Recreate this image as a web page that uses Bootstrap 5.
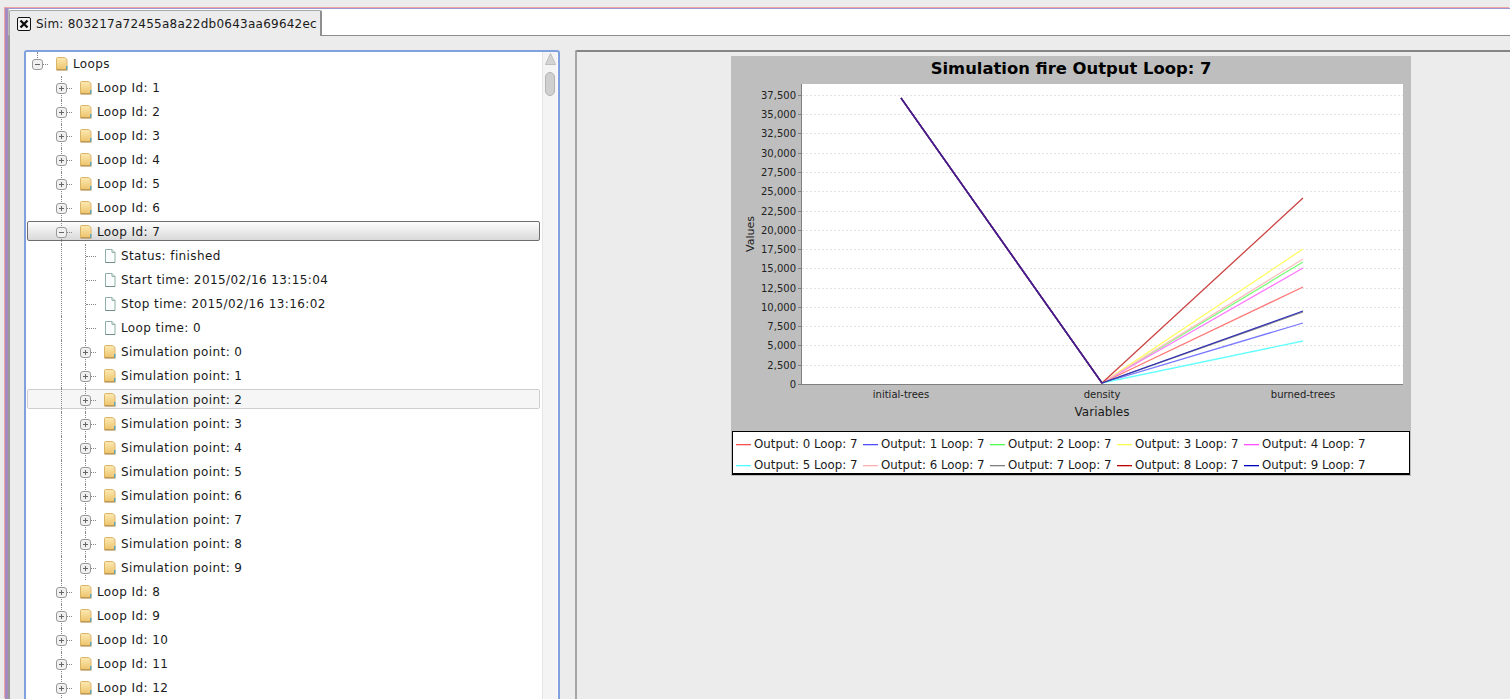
<!DOCTYPE html>
<html lang="en">
  <head>
    <meta charset="UTF-8" />
    <meta name="viewport" content="width=device-width, initial-scale=1.0" />
    <title>Sim output</title>
    <link
      href="https://cdn.jsdelivr.net/npm/bootstrap@5.3.5/dist/css/bootstrap.min.css"
      rel="stylesheet"
    />
    <style>
      html, body { height: 699px; overflow: hidden; background: #ececec; }
      body { font-family: "DejaVu Sans", sans-serif; font-size: 12px; color: #1a1a1a; }
      .app-frame { height: 699px; padding: 8px 0 0 5px; }
      .app-inner { height: 691px; border-left: 3px solid #a58bc0; border-top: 1px solid #9c98d2; box-shadow: -1px -1px 0 #eea3a6; background: #ececec; }
      .tab-strip { height: 27px; padding-top: 1px; background: #fff; border-bottom: 1px solid #8c8c8c; border-left: 1px solid #bdbdbd; }
      .tab-strip .nav-link { height: 26px; width: 313px; padding: 0 0 0 7px; margin: 0; border: 1px solid #a8a8a8; border-right: 2px solid #8f8f8f; border-bottom: 0; border-radius: 2px 2px 0 0; background: #ececec; color: #1a1a1a; font-size: 12px; gap: 5px; letter-spacing: .02em; }
      .tab-body { height: 663px; border-left: 2px solid #9a9a9a; padding: 14px 0 0 14px; gap: 15px; }
      .tree-pane { width: 536px; flex: none; background: #fff; border: 2px solid #7fa2de; border-bottom: 0; border-radius: 3px 3px 0 0; overflow: hidden; }
      .tree-list { width: 517px; flex: none; padding: 0; margin: 0 0 0 -1px; list-style: none; }
      .tree-row { position: relative; height: 24px; display: flex; align-items: center; }
      .tree-row.is-selected::before, .tree-row.is-hover::before { content: ""; position: absolute; left: 2px; right: 2px; top: 1px; bottom: 3px; border-radius: 2px; }
      .tree-row.is-selected::before { border: 1px solid #6e6e6e; background: linear-gradient(#fdfdfd, #d9d9d9); }
      .tree-row.is-hover::before { border: 1px solid #cfcfcf; background: #f6f6f6; }
      .tree-cell { position: relative; width: 24px; height: 24px; flex: none; }
      .tree-guide::before { content: ""; position: absolute; left: 12px; top: 0; bottom: 0; border-left: 1px dotted #888; }
      .tree-up::before { content: ""; position: absolute; left: 12px; top: 0; height: 8px; border-left: 1px dotted #888; }
      .tree-elbow::after { content: ""; position: absolute; left: 13px; right: 1px; top: 12px; border-top: 1px dotted #888; }
      .tree-cell svg { position: absolute; z-index: 1; }
      .tree-expand { left: 7px; top: 7px; }
      .tree-icon { left: 7px; top: 5px; }
      .tree-label { position: relative; white-space: nowrap; letter-spacing: .033em; }
      .tree-scroll { width: 15px; flex: none; background: #f4f4f4; border-left: 1px solid #e6e6e6; padding: 1px 0 0 2px; }
      .scroll-thumb { width: 10px; height: 24px; margin: 7px 0 0 0; background: #cfcfcf; border: 1px solid #b5b5b5; border-radius: 5px; }
      .chart-pane { flex: 1 1 auto; background: #ececec; border-top: 2px solid #858585; border-left: 2px solid #a6a6a6; border-radius: 2px 0 0 0; padding: 4px 0 0 154px; }
      .chart-card { width: 680px; background: #bebebe; padding: 0 1px 1px 1px; }
      .chart-card svg { display: block; margin-left: -1px; }
      .legend-box { height: 44px; background: #fff; border: 1px solid #000; border-bottom-width: 2px; padding: 2px 0 0 3px; }
      .legend-item { width: 127px; height: 21px; flex: none; align-items: center; gap: 3px; white-space: nowrap; font-size: 11.8px; }
      .legend-line { position: relative; width: 15px; height: 1px; flex: none; background: currentColor; }
      .legend-line::after { content: ""; position: absolute; left: 0; right: 0; top: 1px; height: 1px; background: currentColor; opacity: .3; }
      .chart-title { font-size: 16.4px; font-weight: 700; fill: #000; }
      .chart-tick { font-size: 10px; fill: #222; }
      .chart-axis { font-size: 12px; fill: #1a1a1a; }
    </style>
  </head>
  <body>
    <div class="app-frame">
      <div class="app-inner d-flex flex-column">
        <ul class="nav tab-strip">
          <li class="nav-item">
            <a href="#" class="nav-link d-flex align-items-center">
              <svg width="14" height="14" viewBox="0 0 14 14">
                <rect x=".5" y=".5" width="13" height="13" rx="1.5" fill="#f4f4f4" stroke="#111" />
                <path d="M3.5 3.5l7 7M10.5 3.5l-7 7" stroke="#111" stroke-width="2.4" />
              </svg>
              <span>Sim: 803217a72455a8a22db0643aa69642ec</span>
            </a>
          </li>
        </ul>
        <div class="tab-body d-flex">
          <div class="tree-pane d-flex">
            <ul class="tree-list" id="treeList"></ul>
            <div class="tree-scroll">
              <svg class="d-block" width="11" height="12" viewBox="0 0 11 12">
                <path d="M5.5 .5L10.5 11.5H.5z" fill="#d4d4d4" stroke="#bdbdbd" />
              </svg>
              <div class="scroll-thumb"></div>
            </div>
          </div>
          <div class="chart-pane">
            <div class="chart-card">
              <svg width="680" height="375" viewBox="731 56 680 375" id="chartSvg"></svg>
              <div class="legend-box" id="legendBox"></div>
            </div>
          </div>
        </div>
      </div>
    </div>

    <script src="https://cdn.jsdelivr.net/npm/bootstrap@5.3.5/dist/js/bootstrap.bundle.min.js"></script>
    <script>
      const treeList = document.querySelector("#treeList");
      const chartSvg = document.querySelector("#chartSvg");
      const legendBox = document.querySelector("#legendBox");

      const plusIcon = `<svg class="tree-expand" width="11" height="11" viewBox="0 0 11 11"><rect x=".5" y=".5" width="10" height="10" rx="2.5" fill="#f0f0f0" stroke="#9a9a9a"/><path d="M3 5.5h5M5.5 3v5" stroke="#666"/></svg>`;
      const minusIcon = `<svg class="tree-expand" width="11" height="11" viewBox="0 0 11 11"><rect x=".5" y=".5" width="10" height="10" rx="2.5" fill="#f0f0f0" stroke="#9a9a9a"/><path d="M3 5.5h5" stroke="#666"/></svg>`;
      const folderIcon = `<svg class="tree-icon" width="12" height="14" viewBox="0 0 12 14"><defs><linearGradient id="fg" x1="0" y1="0" x2="0" y2="1"><stop offset="0" stop-color="#fbe9b4"/><stop offset="1" stop-color="#efc46c"/></linearGradient></defs><path d="M.5 1.5a1 1 0 0 1 1-1h7l2.500 2v10h-10.500z" fill="url(#fg)" stroke="#d9b566"/><path d="M.5 13h11" stroke="#a87f3a"/><path d="M10 9h1.500v3.500H10z" fill="#57a8c9"/></svg>`;
      const leafIcon = `<svg class="tree-icon" width="12" height="14" viewBox="0 0 12 14"><path d="M1.500 .5h6.500l3 3v10h-9.500z" fill="#fbfdfd" stroke="#8fb0a8"/><path d="M8 .5v3h3" fill="#e3eeeb" stroke="#8fb0a8"/><path d="M1.500 13.500h9.500" stroke="#6f8f88"/></svg>`;

      function addRow(cells, label, rowClass) {
        const li = document.createElement("li");
        li.className = "tree-row " + (rowClass || "");
        let html = "";
        for (let i = 0; i < cells.length; i++) {
          html += `<div class="tree-cell ${cells[i][0]}">${cells[i][1] || ""}</div>`;
        }
        li.innerHTML = html + `<span class="tree-label">${label}</span>`;
        treeList.appendChild(li);
      }

      addRow([["tree-up tree-elbow", minusIcon], ["", folderIcon]], "Loops");

      function addLoop(id) {
        const open = id === 7;
        addRow(
          [["", ""], ["tree-guide tree-elbow", open ? minusIcon : plusIcon], ["", folderIcon]],
          "Loop Id: " + id,
          open ? "is-selected" : ""
        );
      }

      for (let id = 1; id <= 7; id++) {
        addLoop(id);
      }
      const leaves = ["Status: finished", "Start time: 2015/02/16 13:15:04", "Stop time: 2015/02/16 13:16:02", "Loop time: 0"];
      for (let i = 0; i < leaves.length; i++) {
        addRow([["", ""], ["tree-guide", ""], ["tree-guide tree-elbow", ""], ["", leafIcon]], leaves[i]);
      }
      for (let i = 0; i < 10; i++) {
        addRow(
          [["", ""], ["tree-guide", ""], ["tree-guide tree-elbow", plusIcon], ["", folderIcon]],
          "Simulation point: " + i,
          i === 2 ? "is-hover" : ""
        );
      }
      for (let id = 8; id <= 12; id++) {
        addLoop(id);
      }

      // chart, coordinates are the page ones through the viewBox
      const plotTop = 84, plotBottom = 384, plotLeft = 802, plotRight = 1403;
      const xA = 901, xB = 1102, xC = 1303;
      let svg = `<rect x="731" y="56" width="680" height="375" fill="#bebebe"/>`;
      svg += `<text class="chart-title" x="1071" y="74" text-anchor="middle">Simulation fire Output Loop: 7</text>`;
      svg += `<rect x="${plotLeft}" y="${plotTop}" width="${plotRight - plotLeft}" height="${plotBottom - plotTop}" fill="#fff"/>`;

      for (let v = 0; v <= 37500; v += 2500) {
        const y = Math.round(384 - (v / 2500) * 19.27);
        if (v > 0) {
          svg += `<line x1="${plotLeft}" x2="${plotRight}" y1="${y + 0.5}" y2="${y + 0.5}" stroke="#e2e2e2" stroke-dasharray="2 2"/>`;
        }
        svg += `<line x1="798" x2="802" y1="${y + 0.5}" y2="${y + 0.5}" stroke="#808080"/>`;
        svg += `<text class="chart-tick" x="796" y="${y + 4}" text-anchor="end">${v.toLocaleString("en-US")}</text>`;
      }
      svg += `<path d="M801.500 84V384.500H1403" fill="none" stroke="#808080"/>`;

      const ends = [
        ["#ff7777", 287], ["#7777ff", 323], ["#77ff77", 262], ["#ffff66", 249], ["#ff77ff", 268],
        ["#66ffff", 341], ["#ffc0c0", 259], ["#8a8a8a", 312], ["#cc4444", 198], ["#3030b8", 311]
      ];
      for (let i = 0; i < ends.length; i++) {
        svg += `<polyline points="${xA},98 ${xB},383 ${xC},${ends[i][1]}" fill="none" stroke="${ends[i][0]}" stroke-width="1.300"/>`;
      }
      svg += `<line x1="${xA}" y1="98" x2="${xB}" y2="383" stroke="#4a1a8c" stroke-width="1.600"/>`;

      svg += `<text class="chart-tick" x="${xA}" y="398" text-anchor="middle">initial-trees</text>`;
      svg += `<text class="chart-tick" x="${xB}" y="398" text-anchor="middle">density</text>`;
      svg += `<text class="chart-tick" x="${xC}" y="398" text-anchor="middle">burned-trees</text>`;
      svg += `<text class="chart-axis" x="${xB}" y="416" text-anchor="middle">Variables</text>`;
      svg += `<text class="chart-axis" x="0" y="0" text-anchor="middle" style="font-size:11px" transform="translate(754 234) rotate(-90)">Values</text>`;
      chartSvg.innerHTML = svg;

      const legendColors = ["#ff5050", "#5050ff", "#50ff50", "#ffff50", "#ff50ff", "#50ffff", "#ffb0b0", "#808080", "#c00000", "#0000c0"];
      for (let r = 0; r < 2; r++) {
        const row = document.createElement("div");
        row.className = "d-flex";
        for (let c = 0; c < 5; c++) {
          const n = r * 5 + c;
          row.innerHTML += `<div class="legend-item d-flex"><span class="legend-line" style="color:${legendColors[n]}"></span><span>Output: ${n} Loop: 7</span></div>`;
        }
        legendBox.appendChild(row);
      }
    </script>
  </body>
</html>
